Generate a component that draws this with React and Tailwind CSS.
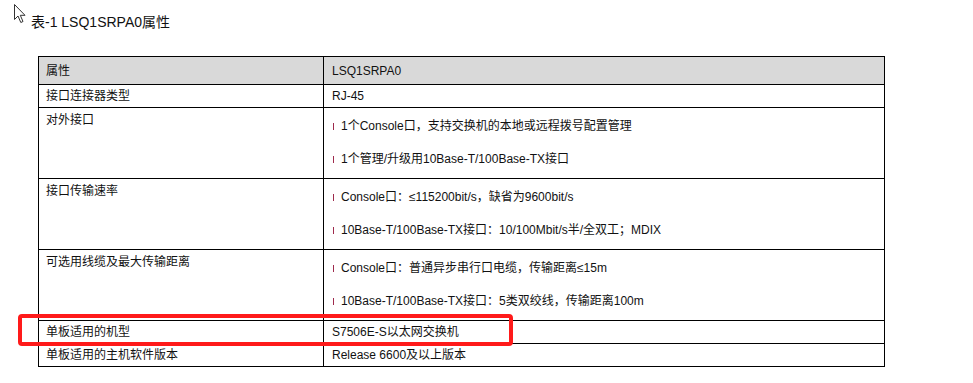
const rows = [
    { name: "接口连接器类型", values: ["RJ-45"] },
    {
        name: "对外接口",
        bullets: ["1个Console口，支持交换机的本地或远程拨号配置管理", "1个管理/升级用10Base-T/100Base-TX接口"],
    },
    {
        name: "接口传输速率",
        bullets: ["Console口：≤115200bit/s，缺省为9600bit/s", "10Base-T/100Base-TX接口：10/100Mbit/s半/全双工；MDIX"],
    },
    {
        name: "可选用线缆及最大传输距离",
        bullets: ["Console口：普通异步串行口电缆，传输距离≤15m", "10Base-T/100Base-TX接口：5类双绞线，传输距离100m"],
    },
    { name: "单板适用的机型", values: ["S7506E-S以太网交换机"] },
    { name: "单板适用的主机软件版本", values: ["Release 6600及以上版本"] },
];

function Cursor() {
    return (
        <svg className="absolute left-[14px] top-[4px]" width="13" height="20" viewBox="0 0 13 20">
            <path d="M0.5 0.5 L0.5 15.5 L4 12 L6.8 18.5 L9 17.5 L6.3 11.3 L11 11.3 Z"
                fill="#fff" stroke="#333" strokeWidth="1" strokeLinejoin="round" />
        </svg>
    );
}

function Bullet({ text }) {
    return (
        <div className="flex items-center h-[16px]">
            <span className="w-px h-[7px] bg-[#9e2a4c] ml-px mr-[7px]" />
            <span>{text}</span>
        </div>
    );
}

export default function App() {
    return (
        <div className="relative w-[973px] h-[383px] bg-white text-[#111] font-['Liberation_Sans','Noto_Sans_CJK_SC',sans-serif] overflow-hidden">
            <Cursor />
            <div className="pt-[12px] pl-[31px] text-[14px] leading-[20px]">表-1 LSQ1SRPA0属性</div>

            <div className="mt-[24px] ml-[38px] w-[847px] border border-black text-[12px] leading-[16px]">
                <div className="flex h-[27px] bg-[#d9d9d9] items-center">
                    <div className="w-[285px] h-full flex items-center pl-[7px] border-r border-black">属性</div>
                    <div className="flex-1 pl-[8px]">LSQ1SRPA0</div>
                </div>
                {rows.map((row) => (
                    <div key={row.name} className="flex border-t border-black">
                        <div className={`w-[285px] pl-[7px] border-r border-black ${row.bullets ? "pt-[4px]" : "py-[3px]"}`}>
                            {row.name}
                        </div>
                        {row.bullets ? (
                            <div className="flex-1 pl-[8px] pt-[10px] pb-[11px] flex flex-col gap-[17px]">
                                {row.bullets.map((b) => <Bullet key={b} text={b} />)}
                            </div>
                        ) : (
                            <div className="flex-1 pl-[8px] py-[3px]">{row.values[0]}</div>
                        )}
                    </div>
                ))}
            </div>

            {/* highlight box */}
            <div className="absolute left-[18px] top-[314px] w-[495px] h-[32px] border-4 border-[#ff1a1a] rounded-[4px]" />
        </div>
    );
}
